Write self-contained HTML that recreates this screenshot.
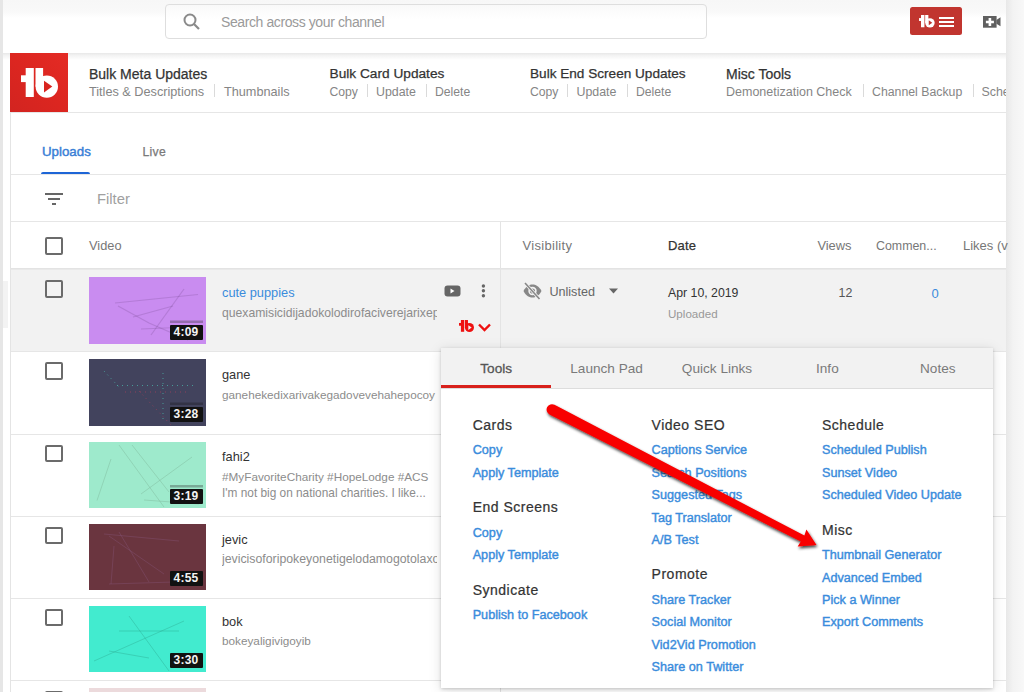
<!DOCTYPE html>
<html><head><meta charset="utf-8">
<style>
*{margin:0;padding:0;box-sizing:border-box}
html,body{width:1024px;height:692px;overflow:hidden;background:#fff;font-family:"Liberation Sans",sans-serif;position:relative}
.a{position:absolute;white-space:nowrap}
.lstrip{left:0;top:0;width:3px;height:692px;background:#e6e6e6}
.rstrip{left:1006px;top:0;width:18px;height:692px;background:linear-gradient(90deg,#e8e8e8,#f3f3f3 40%,#f8f8f8)}
.hdr{left:3px;top:0;width:1003px;height:53px;background:linear-gradient(#f7f7f7,#f9f9f9 12px,#fff 18px)}
.hdrline{left:3px;top:53px;width:1003px;height:7px;background:linear-gradient(#e8e8e8,#f3f3f3 35%,#fff)}
.search{left:165px;top:4px;width:541.5px;height:35px;border:1.5px solid #dedede;border-radius:4px;background:linear-gradient(#f9f9f9,#fff 14px)}
.ph{left:221px;top:14.3px;font-size:14px;letter-spacing:-0.4px;color:#9a9a9a}
.tbbtn{left:910px;top:7px;width:52px;height:27.5px;background:#c1352f;border-radius:2.5px}
.nt{font-size:14px;color:#333;font-weight:400;-webkit-text-stroke:0.25px #333}
.ns{font-size:12.7px;color:#858585}
.sep{width:1px;height:13px;background:#dadada}
.vline{background:#e4e4e4}
.hline{background:#e6e6e6}
.tab{font-size:14px;-webkit-text-stroke:0.45px currentColor}
.th{font-size:13px;color:#777}
.cb{width:17.5px;height:17.5px;border:2px solid #6b6b6b;border-radius:2px}
.thumb{width:117px;height:66.5px}
.dur{z-index:2;background:#111;color:#f4f4f4;font-size:12px;font-weight:700;border-radius:1px;width:33px;height:15.2px;line-height:15.2px;text-align:center;letter-spacing:0.2px}
.title{font-size:12.8px;color:#333}
.desc{font-size:11.75px;color:#8c8c8c}
.pop{left:441px;top:348px;width:552px;height:340px;background:#fff;box-shadow:0 1px 3px rgba(0,0,0,.18),0 2px 12px rgba(0,0,0,.13)}
.ptabs{left:0;top:0;width:552px;height:41px;background:#f2f2f2;border-bottom:1px solid #ddd}
.ptab{top:13px;font-size:13.6px;color:#7a7a7a}
.sel{color:#555;-webkit-text-stroke:0.3px #555}
.ph2{font-size:14px;color:#333;letter-spacing:0.5px;-webkit-text-stroke:0.22px #333}
.lk{font-size:12.65px;color:#3a8cdc;-webkit-text-stroke:0.4px #3a8cdc}
</style></head><body>
<div class="a lstrip"></div>
<div class="a" style="left:3px;top:281px;width:5px;height:47px;background:#f3f3f3"></div>
<div class="a hdr"></div>
<div class="a hdrline"></div>
<div class="a rstrip"></div>

<!-- search -->
<div class="a search"></div>
<svg class="a" style="left:182px;top:12px" width="20" height="20" viewBox="0 0 20 20"><circle cx="8" cy="8" r="5.5" fill="none" stroke="#8a8a8a" stroke-width="2"/><path d="M12 12 L17 17" stroke="#8a8a8a" stroke-width="2.2"/></svg>
<div class="a ph">Search across your channel</div>

<!-- tb button -->
<div class="a tbbtn"></div>
<svg class="a" style="left:918.9px;top:15.2px" width="16.7" height="13.7" viewBox="0 0 39.36 32.36"><rect x="4.7" y="0" width="8.1" height="29" fill="#fff"/><rect x="0" y="7.3" width="5" height="6.8" fill="#fff"/><rect x="14.5" y="0" width="7.6" height="18.5" fill="#fff"/><circle cx="25.8" cy="18.6" r="11.2" fill="#fff"/><path d="M23 12.7 L31.3 18.6 L23 24.4 Z" fill="#c0352f"/></svg>
<div class="a" style="left:939px;top:17px;width:15px;height:2px;background:#fff"></div>
<div class="a" style="left:939px;top:21px;width:15px;height:2px;background:#fff"></div>
<div class="a" style="left:939px;top:25px;width:15px;height:2px;background:#fff"></div>
<!-- camera -->
<svg class="a" style="left:982.5px;top:16px" width="18" height="12" viewBox="0 0 18 12"><rect x="0" y="0" width="13.6" height="11.7" fill="#606060"/><path d="M13.4 4 L17.5 1.3 V10.3 L13.4 7.8 Z" fill="#606060"/><path d="M6.9 2 V10 M2.9 6 H10.9" stroke="#fff" stroke-width="2.6"/></svg>
<!-- TB nav bar -->
<div class="a" style="left:10px;top:53px;width:58px;height:59px;background:linear-gradient(45deg,#d22420,#dc2620 50%,#e42b25)"></div>
<svg class="a" style="left:20.7px;top:67.5px" width="38.0" height="31.0" viewBox="0 0 38.00 31.00"><rect x="4.7" y="0" width="8.1" height="29" fill="#fff"/><rect x="0" y="7.3" width="5" height="6.8" fill="#fff"/><rect x="14.5" y="0" width="7.6" height="18.5" fill="#fff"/><circle cx="25.8" cy="18.6" r="11.2" fill="#fff"/><path d="M23 12.7 L31.3 18.6 L23 24.4 Z" fill="#d9241f"/></svg>

<div class="a nt" style="left:89px;top:66px">Bulk Meta Updates</div>
<div class="a ns" style="left:89px;top:84.5px">Titles &amp; Descriptions</div>
<div class="a sep" style="left:214px;top:84px"></div>
<div class="a ns" style="left:224px;top:84.5px">Thumbnails</div>

<div class="a nt" style="left:329.5px;top:66px;font-size:13.7px">Bulk Card Updates</div>
<div class="a ns" style="left:329.5px;top:84.5px;font-size:12.2px">Copy</div>
<div class="a sep" style="left:367px;top:84px"></div>
<div class="a ns" style="left:376px;top:84.5px;font-size:12.4px">Update</div>
<div class="a sep" style="left:426px;top:84px"></div>
<div class="a ns" style="left:435px;top:84.5px;font-size:12.2px">Delete</div>

<div class="a nt" style="left:530px;top:66px;font-size:13.6px">Bulk End Screen Updates</div>
<div class="a ns" style="left:530px;top:84.5px;font-size:12.2px">Copy</div>
<div class="a sep" style="left:567px;top:84px"></div>
<div class="a ns" style="left:576.5px;top:84.5px;font-size:12.4px">Update</div>
<div class="a sep" style="left:626.5px;top:84px"></div>
<div class="a ns" style="left:636px;top:84.5px;font-size:12.2px">Delete</div>

<div class="a nt" style="left:726px;top:66px">Misc Tools</div>
<div class="a ns" style="left:726px;top:84.5px;font-size:12.5px">Demonetization Check</div>
<div class="a sep" style="left:862.5px;top:84px"></div>
<div class="a ns" style="left:872px;top:84.5px;font-size:12.3px">Channel Backup</div>
<div class="a sep" style="left:972.5px;top:84px"></div>
<div class="a ns" style="left:981.5px;top:84.5px;font-size:12.4px;width:24.5px;overflow:hidden">Schedule</div>

<!-- content frame -->
<div class="a hline" style="left:10px;top:112px;width:996px;height:1px"></div>
<div class="a vline" style="left:10px;top:112px;width:1px;height:580px"></div>

<!-- tabs -->
<div class="a tab" style="left:42px;top:143.5px;font-size:13.3px;color:#3a80d6">Uploads</div>
<div class="a tab" style="left:142.5px;top:144.5px;font-size:12.2px;letter-spacing:0.3px;color:#7a7a7a;-webkit-text-stroke:0.25px #7a7a7a">Live</div>
<div class="a" style="left:41px;top:172px;width:49px;height:3px;background:#1d65d6;border-radius:2px 2px 0 0"></div>
<div class="a hline" style="left:11px;top:174px;width:995px;height:1px"></div>

<!-- filter -->
<svg class="a" style="left:45px;top:193px" width="18" height="12" viewBox="0 0 18 12"><path d="M0 1H18M3 6H15M7 11H11" stroke="#666" stroke-width="2"/></svg>
<div class="a" style="left:97px;top:190.7px;font-size:14.8px;color:#a0a0a0">Filter</div>
<div class="a hline" style="left:11px;top:221px;width:995px;height:1px"></div>

<!-- table header -->
<div class="a cb" style="left:45px;top:237px"></div>
<div class="a th" style="left:89px;top:238.4px;font-size:12.8px">Video</div>

<div class="a th" style="left:522.5px;top:238.3px;letter-spacing:0.3px">Visibility</div>
<div class="a th" style="left:668px;top:238.3px;color:#333;-webkit-text-stroke:0.25px #333;letter-spacing:0.2px">Date</div>
<div class="a th" style="left:817.4px;top:238.3px;font-size:12.9px">Views</div>
<div class="a th" style="left:876px;top:238.8px;font-size:12.4px">Commen...</div>
<div class="a th" style="left:963px;top:238.3px">Likes (v</div>
<div class="a" style="left:11px;top:268px;width:995px;height:3px;background:linear-gradient(#e0e0e0,#f2f2f2)"></div>

<!-- rows -->
<div class="a" style="left:11px;top:270px;width:995px;height:81.4px;background:#f2f2f2"></div>
<div class="a hline" style="left:11px;top:351.4px;width:995px;height:1px"></div>
<div class="a hline" style="left:11px;top:433.5px;width:995px;height:1px"></div>
<div class="a hline" style="left:11px;top:515.6px;width:995px;height:1px"></div>
<div class="a hline" style="left:11px;top:597.7px;width:995px;height:1px"></div>
<div class="a hline" style="left:11px;top:679.8px;width:995px;height:1px"></div>
<!-- row 1 -->
<div class="a cb" style="left:45px;top:280.3px"></div>
<div class="a thumb" style="left:89px;top:277.3px;background:#c98cf0"></div>
<div class="a dur" style="left:169.5px;top:324.5px">4:09</div>
<div class="a title" style="left:222px;top:285.2px;color:#3a8cdc">cute puppies</div>
<div class="a desc" style="left:222px;top:305.7px;font-size:12.2px;width:215px;overflow:hidden">quexamisicidijadokolodirofaciverejarixep</div>
<!-- row1 extras -->
<svg class="a" style="left:443.5px;top:284.5px" width="17" height="12" viewBox="0 0 17 12"><rect x="0.5" y="0.5" width="16" height="11" rx="3" fill="#666"/><path d="M6.5 3.5 L10.5 6 L6.5 8.5Z" fill="#fff"/></svg>
<svg class="a" style="left:480px;top:283px" width="7" height="16" viewBox="0 0 7 16"><circle cx="3.4" cy="3" r="1.7" fill="#666"/><circle cx="3.4" cy="7.8" r="1.7" fill="#666"/><circle cx="3.4" cy="12.8" r="1.7" fill="#666"/></svg>
<svg class="a" style="left:459px;top:320px" width="16.0" height="13.2" viewBox="0 0 39.47 32.47"><rect x="4.7" y="0" width="8.1" height="29" fill="#ee1111"/><rect x="0" y="7.3" width="5" height="6.8" fill="#ee1111"/><rect x="14.5" y="0" width="7.6" height="18.5" fill="#ee1111"/><circle cx="25.8" cy="18.6" r="11.2" fill="#ee1111"/><path d="M23 12.7 L31.3 18.6 L23 24.4 Z" fill="#f2f2f2"/></svg>
<svg class="a" style="left:477px;top:322px" width="15" height="11" viewBox="0 0 15 11"><path d="M2 2.5 L7.5 8 L13 2.5" stroke="#ee1111" stroke-width="2.4" fill="none"/></svg>
<svg class="a" style="left:522px;top:282px" width="21" height="18" viewBox="0 0 21 18"><path d="M1.5 9 C4 4 7.5 2.5 10.5 2.5 C13.5 2.5 17 4 19.5 9 C17 14 13.5 15.5 10.5 15.5 C7.5 15.5 4 14 1.5 9Z" fill="#888"/><circle cx="10.5" cy="9" r="3.4" fill="none" stroke="#f2f2f2" stroke-width="1.6"/><path d="M3 1 L17.5 17" stroke="#f2f2f2" stroke-width="3.2"/><path d="M3 1 L17.5 17" stroke="#888" stroke-width="1.6"/></svg>
<div class="a" style="left:549.4px;top:285.4px;font-size:12.6px;color:#666">Unlisted</div>
<svg class="a" style="left:608px;top:288px" width="11" height="6" viewBox="0 0 11 6"><path d="M1 0.5 H10 L5.5 5.5Z" fill="#666"/></svg>
<div class="a" style="left:668px;top:286.4px;font-size:12.3px;color:#333">Apr 10, 2019</div>
<div class="a" style="left:668px;top:306.5px;font-size:11.6px;color:#999">Uploaded</div>
<div class="a" style="left:838.5px;top:286px;font-size:12.4px;color:#555">12</div>
<div class="a" style="left:931.5px;top:285.5px;font-size:13px;color:#3a8cdc">0</div>


<!-- row 2 -->
<div class="a cb" style="left:45px;top:362.4px"></div>
<div class="a thumb" style="left:89px;top:359.4px;background:#42435d"></div>
<div class="a dur" style="left:169.5px;top:406.6px">3:28</div>
<div class="a title" style="left:222px;top:367.3px;color:#333">gane</div>
<div class="a desc" style="left:222px;top:387.8px;font-size:11.75px">ganehekedixarivakegadovevehahepocoy</div>
<!-- row 3 -->
<div class="a cb" style="left:45px;top:444.5px"></div>
<div class="a thumb" style="left:89px;top:441.5px;background:#9eeacc"></div>
<div class="a dur" style="left:169.5px;top:488.7px">3:19</div>
<div class="a title" style="left:222px;top:449.4px;color:#333">fahi2</div>
<div class="a desc" style="left:222px;top:469.9px;font-size:11.75px">#MyFavoriteCharity #HopeLodge #ACS</div>
<div class="a desc" style="left:222px;top:485.8px;font-size:11.85px">I'm not big on national charities. I like...</div>
<!-- row 4 -->
<div class="a cb" style="left:45px;top:526.6px"></div>
<div class="a thumb" style="left:89px;top:523.6px;background:#6a353f"></div>
<div class="a dur" style="left:169.5px;top:570.8px">4:55</div>
<div class="a title" style="left:222px;top:531.5px;color:#333">jevic</div>
<div class="a desc" style="left:222px;top:552.0px;font-size:12.3px;width:215px;overflow:hidden">jevicisoforipokeyonetigelodamogotolaxo</div>
<!-- row 5 -->
<div class="a cb" style="left:45px;top:608.7px"></div>
<div class="a thumb" style="left:89px;top:605.7px;background:#42ebcf"></div>
<div class="a dur" style="left:169.5px;top:652.9px">3:30</div>
<div class="a title" style="left:222px;top:613.6px;color:#333">bok</div>
<div class="a desc" style="left:222px;top:634.1px;font-size:11.75px">bokeyaligivigoyib</div>

<div class="a vline" style="left:500px;top:222px;width:1px;height:470px"></div>
<!-- thumb deco -->
<svg class="a" style="left:89px;top:277.3px" width="117" height="67" viewBox="0 0 117 67"><g stroke="#6a3f80" stroke-opacity="0.22" stroke-width="1.2" fill="none"><path d="M26 26 L109 17.5"/><path d="M29 29 L60 46 L99 63"/><path d="M44 40 L84 29"/><path d="M52 52 L100 50"/><path d="M95 12 L62 58"/></g><rect x="81" y="43.5" width="33" height="2.5" fill="#333" opacity="0.35"/></svg>
<svg class="a" style="left:89px;top:359.4px" width="117" height="67" viewBox="0 0 117 67"><g fill="none" stroke-width="1" stroke-dasharray="1 4" stroke-opacity="0.6"><path d="M28 26.5 L104 26.5" stroke="#4fd6c0"/><path d="M74 14 L74 64" stroke="#4fd6c0"/><path d="M15 12 L30 28" stroke="#4fd6c0"/><path d="M36 33 L100 33" stroke="#c0405a"/><path d="M50 32 L82 66" stroke="#c0405a"/></g><rect x="81" y="43.5" width="33" height="2.5" fill="#111" opacity="0.3"/></svg>
<svg class="a" style="left:89px;top:441.5px" width="117" height="67" viewBox="0 0 117 67"><g stroke="#7fb79c" stroke-opacity="0.45" stroke-width="1" fill="none"><path d="M22 17 L8 58.5"/><path d="M30 3 L75 65"/><path d="M43 3 L80 50"/><path d="M103 15 L52 52"/><path d="M55 58 L110 62"/></g><rect x="81" y="43" width="33" height="2.5" fill="#333" opacity="0.35"/></svg>
<svg class="a" style="left:89px;top:523.6px" width="117" height="67" viewBox="0 0 117 67"><g stroke="#8a5a80" stroke-opacity="0.35" stroke-width="1" fill="none"><path d="M15 10 L90 17"/><path d="M20 12 L75 50"/><path d="M25 22 L22 60"/><path d="M30 8 L60 58"/><path d="M20 60 L85 58"/></g></svg>
<svg class="a" style="left:89px;top:605.7px" width="117" height="67" viewBox="0 0 117 67"><g stroke="#2aa88e" stroke-opacity="0.4" stroke-width="1" fill="none"><path d="M5 55 L95 15"/><path d="M20 45 L60 52"/><path d="M30 25 L90 25"/><path d="M40 10 L80 65"/></g></svg>
<!-- row 6 partial -->
<div class="a cb" style="left:45px;top:690.8px"></div>
<div class="a thumb" style="left:89px;top:687.8px;background:#ecdadc"></div>

<!-- popup -->
<div class="a pop">
<div class="a ptabs"></div>
<div class="a ptab sel" style="left:0.0px;width:110.4px;text-align:center">Tools</div>
<div class="a ptab" style="left:110.4px;width:110.4px;text-align:center">Launch Pad</div>
<div class="a ptab" style="left:220.8px;width:110.4px;text-align:center">Quick Links</div>
<div class="a ptab" style="left:331.2px;width:110.4px;text-align:center">Info</div>
<div class="a ptab" style="left:441.6px;width:110.4px;text-align:center">Notes</div>
<div class="a" style="left:0;top:37px;width:110px;height:3px;background:#d8211c"></div>
<div class="a ph2" style="left:31.7px;top:68.7px">Cards</div>
<div class="a lk" style="left:31.7px;top:95.3px">Copy</div>
<div class="a lk" style="left:31.7px;top:117.7px">Apply Template</div>
<div class="a ph2" style="left:31.7px;top:151.2px">End Screens</div>
<div class="a lk" style="left:31.7px;top:177.8px">Copy</div>
<div class="a lk" style="left:31.7px;top:200.2px">Apply Template</div>
<div class="a ph2" style="left:31.7px;top:233.7px">Syndicate</div>
<div class="a lk" style="left:31.7px;top:260.3px">Publish to Facebook</div>
<div class="a ph2" style="left:210.6px;top:68.7px">Video SEO</div>
<div class="a lk" style="left:210.6px;top:95.3px">Captions Service</div>
<div class="a lk" style="left:210.6px;top:117.7px">Search Positions</div>
<div class="a lk" style="left:210.6px;top:140.1px">Suggested Tags</div>
<div class="a lk" style="left:210.6px;top:162.5px">Tag Translator</div>
<div class="a lk" style="left:210.6px;top:184.9px">A/B Test</div>
<div class="a ph2" style="left:210.6px;top:218.4px">Promote</div>
<div class="a lk" style="left:210.6px;top:245.0px">Share Tracker</div>
<div class="a lk" style="left:210.6px;top:267.4px">Social Monitor</div>
<div class="a lk" style="left:210.6px;top:289.8px">Vid2Vid Promotion</div>
<div class="a lk" style="left:210.6px;top:312.2px">Share on Twitter</div>
<div class="a ph2" style="left:381.0px;top:68.7px">Schedule</div>
<div class="a lk" style="left:381.0px;top:95.3px">Scheduled Publish</div>
<div class="a lk" style="left:381.0px;top:117.7px">Sunset Video</div>
<div class="a lk" style="left:381.0px;top:140.1px">Scheduled Video Update</div>
<div class="a ph2" style="left:381.0px;top:173.6px">Misc</div>
<div class="a lk" style="left:381.0px;top:200.2px">Thumbnail Generator</div>
<div class="a lk" style="left:381.0px;top:222.6px">Advanced Embed</div>
<div class="a lk" style="left:381.0px;top:245.0px">Pick a Winner</div>
<div class="a lk" style="left:381.0px;top:267.4px">Export Comments</div>
</div>
<!-- arrow -->
<svg class="a" style="left:0;top:0" width="1024" height="692" viewBox="0 0 1024 692">
<defs><filter id="sh" x="-10%" y="-10%" width="130%" height="130%"><feGaussianBlur in="SourceAlpha" stdDeviation="1.4"/><feOffset dx="1.2" dy="2" result="o"/><feComponentTransfer><feFuncA type="linear" slope="0.75"/></feComponentTransfer><feMerge><feMergeNode/><feMergeNode in="SourceGraphic"/></feMerge></filter></defs>
<g filter="url(#sh)">
<path d="M554.5 404.8 L804.4 535.6 L806.4 529.5 L816.5 545.1 L797.7 546.6 L800.8 541.6 L549.5 414.4 A5.4 5.4 0 0 1 554.5 404.8 Z" fill="#f80000"/>
</g>
</svg>

</body></html>
